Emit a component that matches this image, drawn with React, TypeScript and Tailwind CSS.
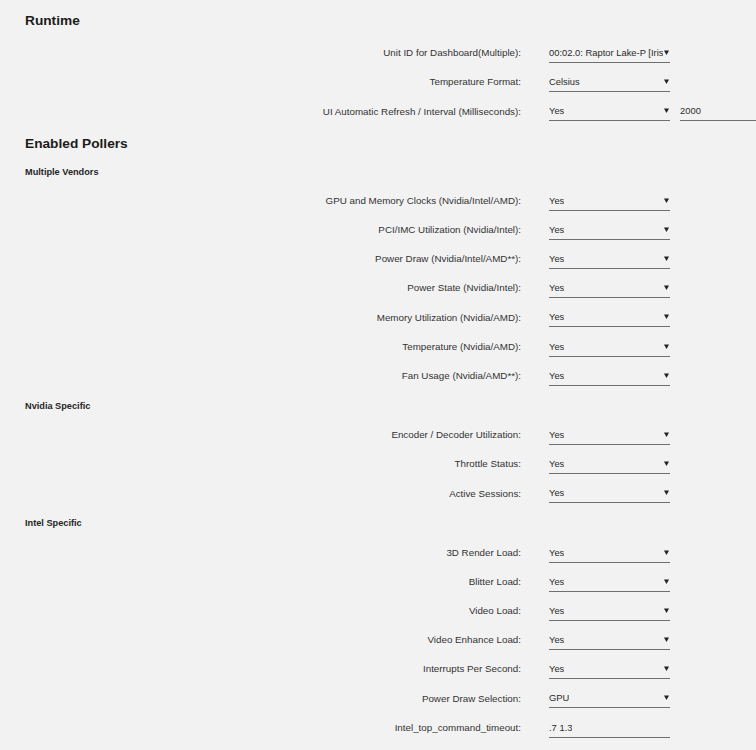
import type { ReactNode } from 'react';

type Field = {
  label: string;
  value: string;
  select?: boolean;
  extra?: string;
};

const runtime: Field[] = [
  { label: 'Unit ID for Dashboard(Multiple):', value: '00:02.0: Raptor Lake-P [Iris', select: true },
  { label: 'Temperature Format:', value: 'Celsius', select: true },
  { label: 'UI Automatic Refresh / Interval (Milliseconds):', value: 'Yes', select: true, extra: '2000' },
];

const multiVendor: Field[] = [
  { label: 'GPU and Memory Clocks (Nvidia/Intel/AMD):', value: 'Yes', select: true },
  { label: 'PCI/IMC Utilization (Nvidia/Intel):', value: 'Yes', select: true },
  { label: 'Power Draw (Nvidia/Intel/AMD**):', value: 'Yes', select: true },
  { label: 'Power State (Nvidia/Intel):', value: 'Yes', select: true },
  { label: 'Memory Utilization (Nvidia/AMD):', value: 'Yes', select: true },
  { label: 'Temperature (Nvidia/AMD):', value: 'Yes', select: true },
  { label: 'Fan Usage (Nvidia/AMD**):', value: 'Yes', select: true },
];

const nvidia: Field[] = [
  { label: 'Encoder / Decoder Utilization:', value: 'Yes', select: true },
  { label: 'Throttle Status:', value: 'Yes', select: true },
  { label: 'Active Sessions:', value: 'Yes', select: true },
];

const intel: Field[] = [
  { label: '3D Render Load:', value: 'Yes', select: true },
  { label: 'Blitter Load:', value: 'Yes', select: true },
  { label: 'Video Load:', value: 'Yes', select: true },
  { label: 'Video Enhance Load:', value: 'Yes', select: true },
  { label: 'Interrupts Per Second:', value: 'Yes', select: true },
  { label: 'Power Draw Selection:', value: 'GPU', select: true },
  { label: 'Intel_top_command_timeout:', value: '.7 1.3' },
];

function Caret() {
  return (
    <svg viewBox="0 0 5 5" className="absolute right-[1px] top-1/2 h-[5px] w-[5px] -translate-y-[60%]">
      <polygon points="0,0.5 5,0.5 2.5,5" fill="#222" />
    </svg>
  );
}

function Input({ value, select }: { value: string; select?: boolean }) {
  return (
    <div className="relative flex h-[19px] w-[121px] shrink-0 items-center border-b-[1.5px] border-[#6f6f6f]">
      <span className="block overflow-hidden whitespace-nowrap text-[9.4px] leading-[18px] text-[#2b2b2b]">
        {value}
      </span>
      {select ? <Caret /> : null}
    </div>
  );
}

function Row({ field }: { field: Field }) {
  return (
    <div className="flex h-[29.2px] items-center">
      <span className="w-[496px] shrink-0 text-right text-[9.8px] text-[#333]">{field.label}</span>
      <div className="ml-[28px]">
        <Input value={field.value} select={field.select} />
      </div>
      {field.extra ? (
        <div className="ml-[10px]">
          <Input value={field.extra} />
        </div>
      ) : null}
    </div>
  );
}

function Heading({ children, className = '' }: { children: ReactNode; className?: string }) {
  return <h2 className={`text-[13.7px] font-bold leading-[20px] text-[#1c1b1b] ${className}`}>{children}</h2>;
}

function Group({ title, fields }: { title: string; fields: Field[] }) {
  return (
    <div>
      <h3 className="py-[8px] text-[9.2px] font-bold leading-[14px] text-[#262626]">{title}</h3>
      {fields.map((f) => (
        <Row key={f.label} field={f} />
      ))}
    </div>
  );
}

export default function App() {
  return (
    <div className="min-h-screen w-full overflow-hidden bg-[#f2f2f2] px-[25px] pt-[11px] font-['Liberation_Sans',Arial,sans-serif]">
      <Heading>Runtime</Heading>
      <div className="mt-[8px]">
        {runtime.map((f) => (
          <Row key={f.label} field={f} />
        ))}
      </div>

      <Heading className="mt-[7px]">Enabled Pollers</Heading>
      <div className="mt-[3px]">
        <Group title="Multiple Vendors" fields={multiVendor} />
        <Group title="Nvidia Specific" fields={nvidia} />
        <Group title="Intel Specific" fields={intel} />
      </div>
    </div>
  );
}
